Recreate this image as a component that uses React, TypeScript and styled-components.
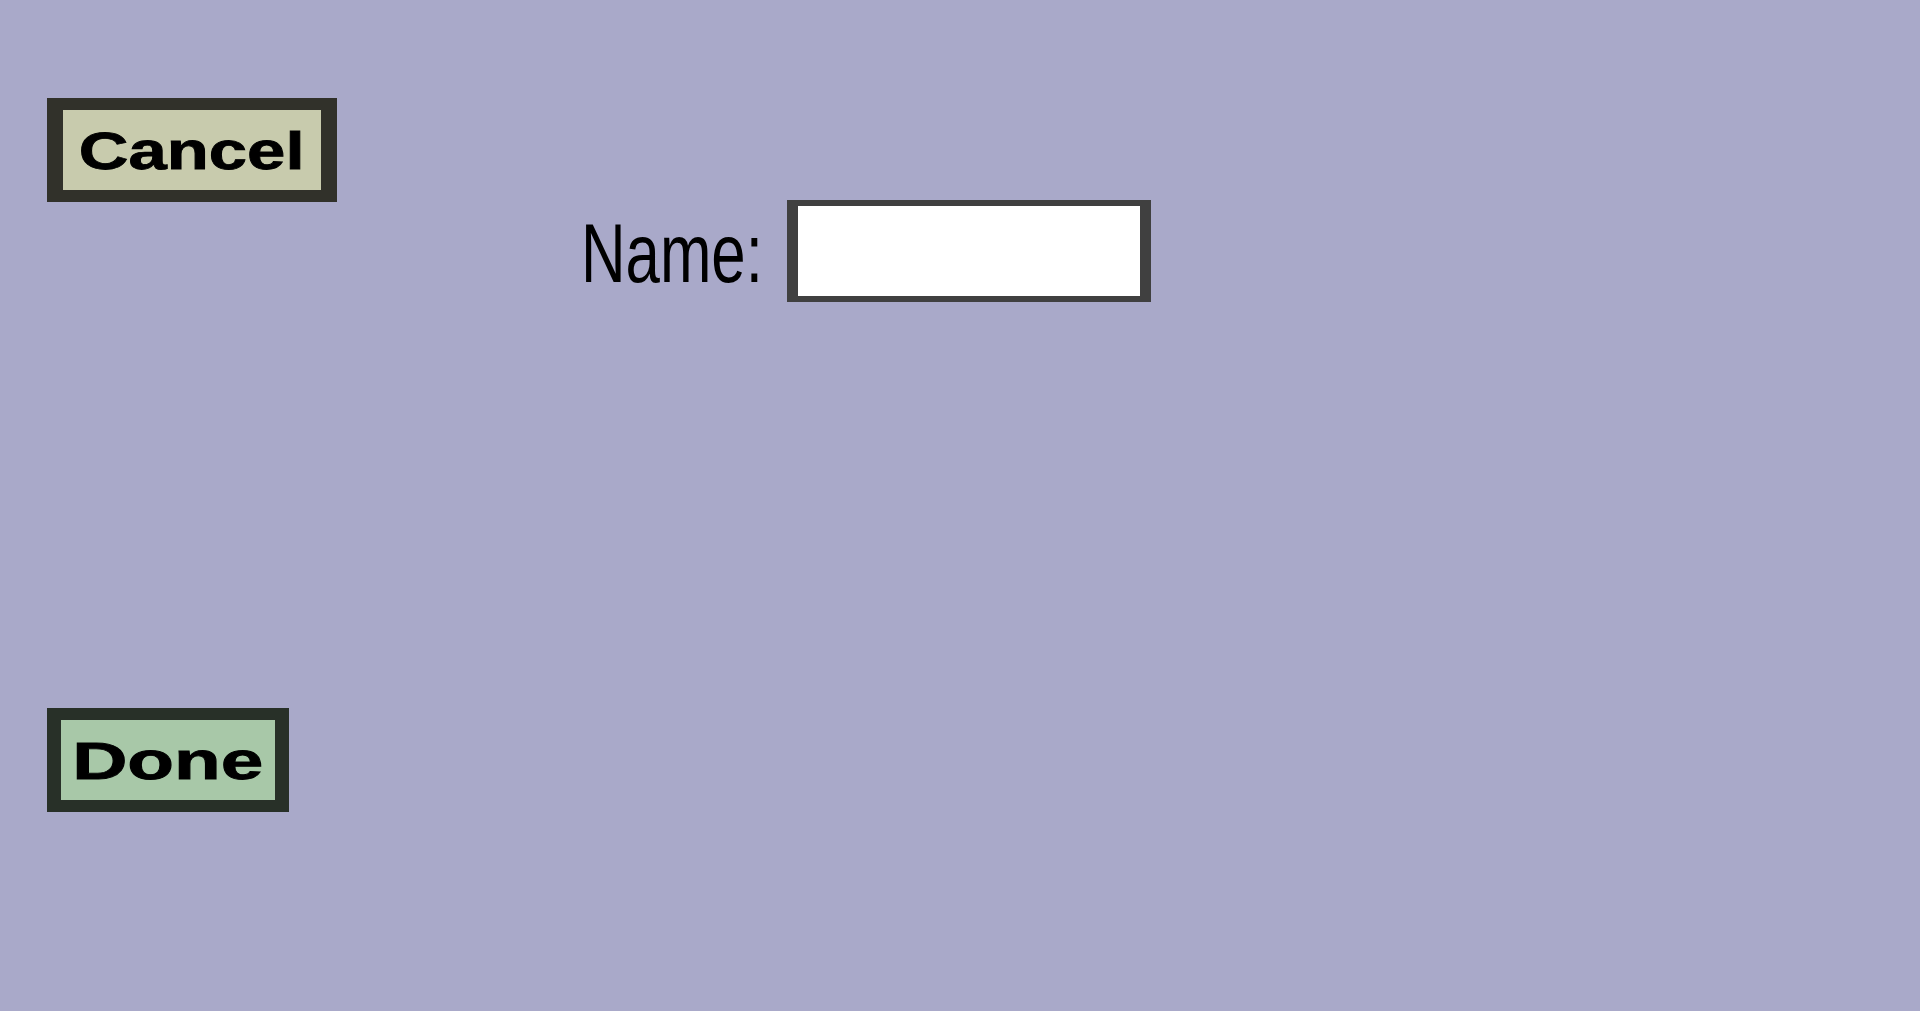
import React from 'react';
import styled, { createGlobalStyle } from 'styled-components';

const GlobalStyle = createGlobalStyle`
  html, body, #root {
    margin: 0;
    padding: 0;
    width: 100%;
    height: 100%;
    overflow: hidden;
  }
  body {
    background: #a9a9c9;
    font-family: "Liberation Sans", Arial, sans-serif;
  }
`;

const Page = styled.div`
  display: flex;
  flex-direction: column;
  align-items: flex-start;
  box-sizing: border-box;
  height: 100%;
  padding: 98px 0 0 47px;
  background: #a9a9c9;
`;

const TopRow = styled.div`
  display: flex;
  align-items: flex-start;
`;

const Button = styled.button<{ $fill: string; $edge: string; $w: number; $bx: number }>`
  display: flex;
  align-items: center;
  justify-content: center;
  box-sizing: border-box;
  width: ${p => p.$w}px;
  height: 104px;
  margin: 0;
  padding: 0;
  border-style: solid;
  border-width: 12px ${p => p.$bx}px;
  border-color: ${p => p.$edge};
  border-radius: 0;
  background: ${p => p.$fill};
  cursor: pointer;
`;

const ButtonText = styled.span<{ $sx: number }>`
  display: inline-block;
  font-family: "Liberation Sans", Arial, sans-serif;
  font-weight: 700;
  font-size: 51px;
  line-height: 1;
  color: #000;
  -webkit-text-stroke: 0.8px #000;
  transform: scaleX(${p => p.$sx});
  margin-top: 2px;
`;

const Field = styled.label`
  display: flex;
  align-items: center;
  gap: 25px;
  margin: 102px 0 0 244px;
`;

const LabelBox = styled.span`
  display: inline-block;
  width: 181px;
  margin-top: 3px;
  white-space: nowrap;
`;

const LabelText = styled.span`
  display: inline-block;
  font-family: "Liberation Sans", Arial, sans-serif;
  font-size: 84px;
  line-height: 1;
  color: #000;
  transform: scaleX(0.735);
  transform-origin: left center;
`;

const NameInput = styled.input`
  box-sizing: border-box;
  width: 364px;
  height: 102px;
  margin: 0;
  padding: 0 8px;
  border-style: solid;
  border-width: 6px 11px;
  border-color: #404040;
  border-radius: 0;
  background: #fff;
  outline: none;
  font-family: "Liberation Sans", Arial, sans-serif;
  font-size: 48px;
`;

const DoneSlot = styled.div`
  margin-top: 406px;
`;

export default function App() {
  return (
    <>
      <GlobalStyle />
      <Page>
        <TopRow>
          <Button $fill="#c8cbad" $edge="#31312a" $w={290} $bx={16}>
            <ButtonText $sx={1.35}>Cancel</ButtonText>
          </Button>
          <Field>
            <LabelBox>
              <LabelText>Name:</LabelText>
            </LabelBox>
            <NameInput type="text" />
          </Field>
        </TopRow>
        <DoneSlot>
          <Button $fill="#a8c8a8" $edge="#283028" $w={242} $bx={14}>
            <ButtonText $sx={1.5}>Done</ButtonText>
          </Button>
        </DoneSlot>
      </Page>
    </>
  );
}
